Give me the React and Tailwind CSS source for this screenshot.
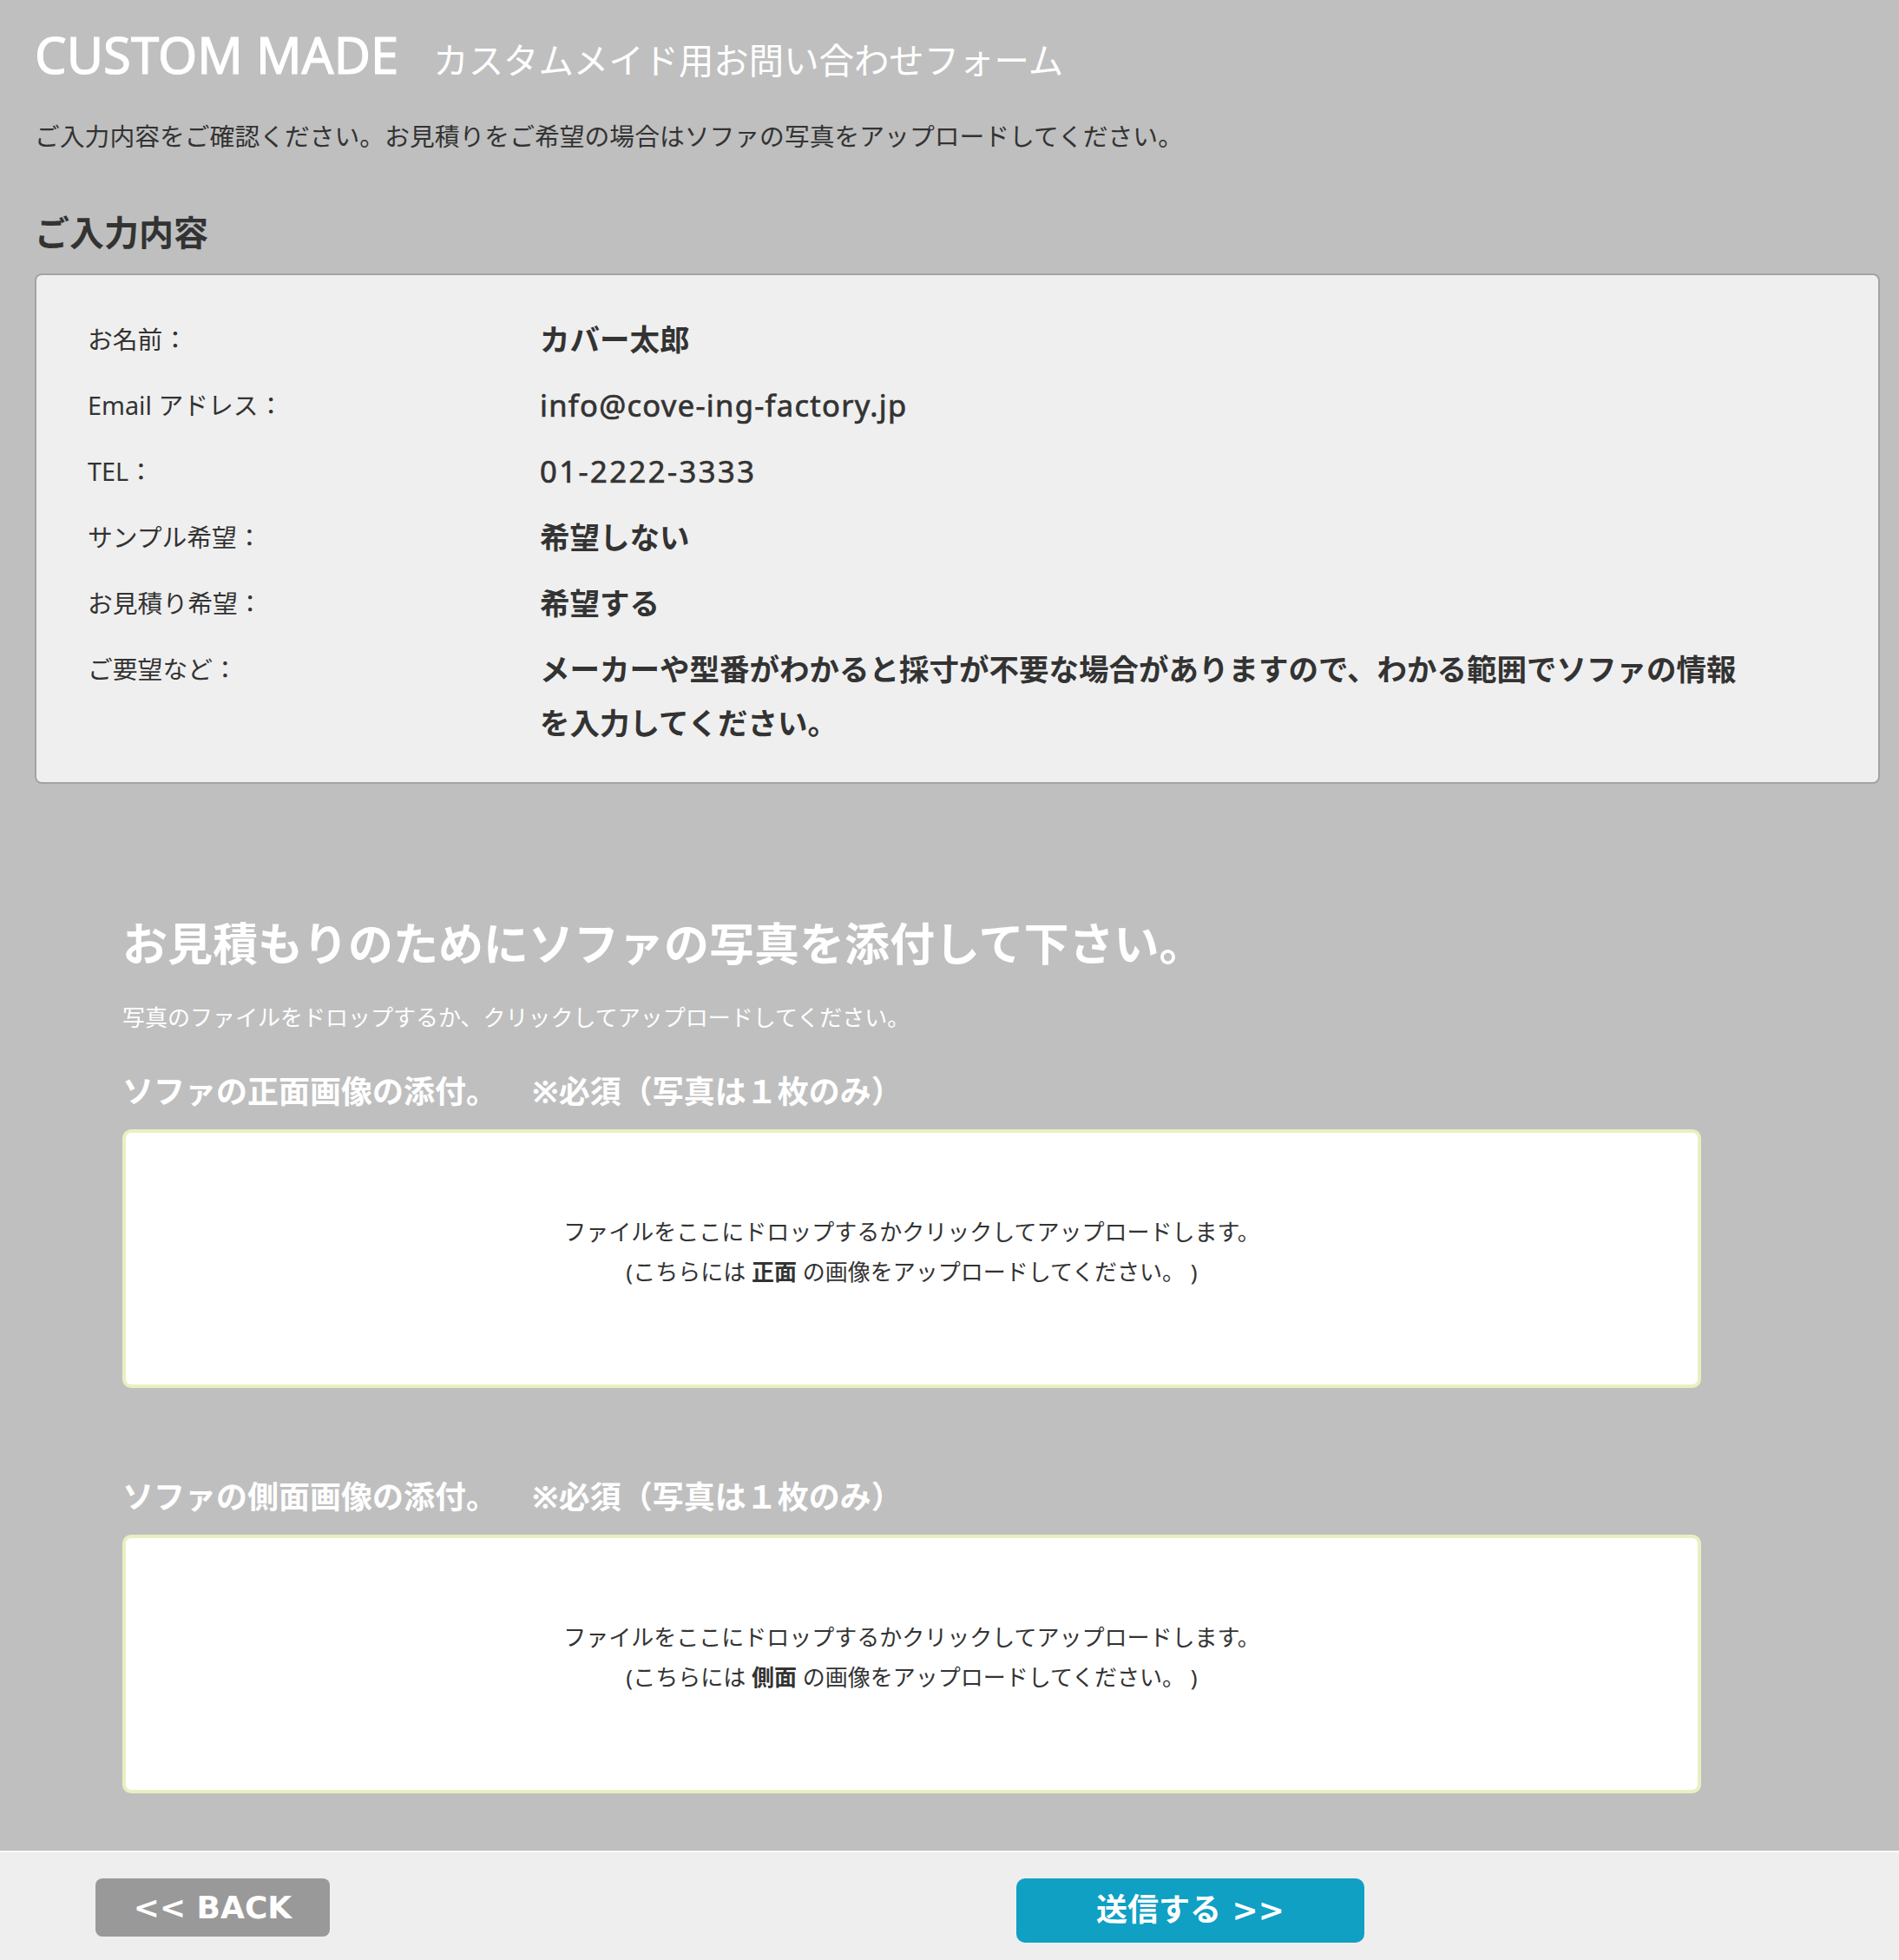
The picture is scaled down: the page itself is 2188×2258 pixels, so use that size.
import React from "react";

const rows = [
  ["お名前：", "カバー太郎", "font-bold"],
  ["Email アドレス：", "info@cove-ing-factory.jp", "tracking-[1.3px] [-webkit-text-stroke:0.7px_#333333]"],
  ["TEL：", "01-2222-3333", "tracking-[2.5px] [-webkit-text-stroke:0.7px_#333333]"],
  ["サンプル希望：", "希望しない", "font-bold"],
  ["お見積り希望：", "希望する", "font-bold"],
  ["ご要望など：", "メーカーや型番がわかると採寸が不要な場合がありますので、わかる範囲でソファの情報を入力してください。", "font-bold"],
];

function DropBox({ word }) {
  return (
    <div className="w-[1819px] h-[298px] bg-white border-[4px] border-[#e8f0c2] rounded-[10px] flex flex-col items-center justify-center pb-[16px] text-[26px] leading-[46px] text-[#333333]">
      <p>ファイルをここにドロップするかクリックしてアップロードします。</p>
      <p>
        (こちらには <span className="font-bold">{word}</span> の画像をアップロードしてください。 )
      </p>
    </div>
  );
}

function FieldLabel({ side, className }) {
  return (
    <h3 className={`text-[36px] leading-[50px] font-bold ${className}`}>
      ソファの{side}画像の添付。<span className="ml-[40px]">※必須（写真は１枚のみ）</span>
    </h3>
  );
}

export default function App() {
  return (
    <div className="w-[2188px] min-h-[2258px] bg-[#bfbfbf] font-['Noto_Sans','Noto_Sans_CJK_JP',sans-serif] text-[#333333] flex flex-col">
      <div className="pl-[40px] pt-[23px]">
        <div className="flex items-baseline text-white">
          <h1 className="text-[58px] leading-[80px] font-normal [-webkit-text-stroke:1.2px_#ffffff]">CUSTOM MADE</h1>
          <span className="ml-[40px] text-[40.4px] leading-[56px]">カスタムメイド用お問い合わせフォーム</span>
        </div>
        <p className="mt-[34px] text-[28.8px] leading-[40px]">
          ご入力内容をご確認ください。お見積りをご希望の場合はソファの写真をアップロードしてください。
        </p>
        <h2 className="mt-[63px] text-[40px] leading-[56px] font-bold">ご入力内容</h2>
        <div className="mt-[19px] w-[2126px] bg-[#efefef] border-2 border-[#a3a3a3] rounded-[8px] pl-[59px] pt-[43px] pb-[37px] flex flex-col gap-[14px]">
          {rows.map(([label, value, cls]) => (
            <div key={label} className="flex items-start">
              <div className="w-[521px] shrink-0 text-[28.8px] leading-[62px]">{label}</div>
              <div className={`w-[1395px] text-[34.5px] leading-[62px] ${cls}`}>{value}</div>
            </div>
          ))}
        </div>
      </div>

      <div className="pl-[141px] mt-[148px] text-white">
        <h2 className="text-[52px] leading-[72px] font-bold">お見積もりのためにソファの写真を添付して下さい。</h2>
        <p className="mt-[31px] text-[26px] leading-[36px]">写真のファイルをドロップするか、クリックしてアップロードしてください。</p>
        <FieldLabel side="正面" className="mt-[43px]" />
        <div className="mt-[18px]">
          <DropBox word="正面" />
        </div>
        <FieldLabel side="側面" className="mt-[101px]" />
        <div className="mt-[18px]">
          <DropBox word="側面" />
        </div>
      </div>

      <div className="mt-[66px] flex-1 bg-[#eeeeee] border-t-2 border-white pt-[30px] pb-[17px] flex items-start font-['DejaVu_Sans','Noto_Sans_CJK_JP',sans-serif] font-bold text-white">
        <button className="ml-[110px] w-[270px] h-[67px] bg-[#999999] rounded-[8px] text-[36px] flex items-center justify-center">
          &lt;&lt; BACK
        </button>
        <button className="ml-[791px] w-[401px] h-[74px] bg-[#0fa0c4] rounded-[10px] text-[36px] flex items-center justify-center">
          送信する &gt;&gt;
        </button>
      </div>
    </div>
  );
}
